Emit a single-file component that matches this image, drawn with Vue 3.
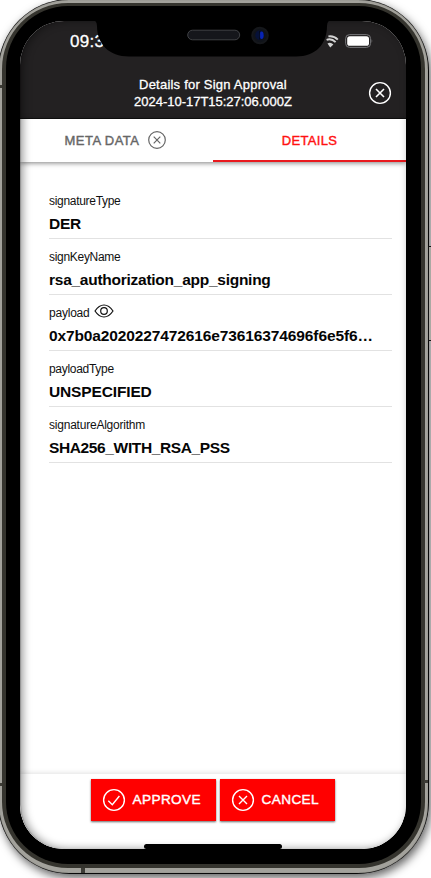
<script setup>
const fields = [
  { label: 'signatureType', value: 'DER', cls: 'f-type' },
  { label: 'signKeyName', value: 'rsa_authorization_app_signing', cls: 'f-key' },
  { label: 'payload', value: '0x7b0a2020227472616e73616374696f6e5f6…', eye: true, cls: 'f-payload' },
  { label: 'payloadType', value: 'UNSPECIFIED', cls: 'f-ptype' },
  { label: 'signatureAlgorithm', value: 'SHA256_WITH_RSA_PSS', cls: 'f-algo' },
]
</script>

<template>
  <main class="stage">
    <div class="device">
      <div class="steel">
        <div class="rim">
          <div class="bezel">
            <div class="screen">
              <header class="header">
                <div class="status">
                  <span class="time">09:3</span>
                  <span class="indicators">
                    <svg class="wifi" width="14" height="13" viewBox="0 0 14 13" fill="none" stroke="#d4d4d4" stroke-width="1.9">
                      <path d="M3.4 1.4Q9 .6 12.8 4.6M1.6 4.8Q6.5 3 10.6 7.2" />
                      <path d="M2.5 8.4Q5.6 6.8 8.4 9.4L5.2 12.6Z" fill="#d4d4d4" stroke="none" />
                    </svg>
                    <svg class="battery" width="28" height="14" viewBox="0 0 28 14">
                      <rect x=".6" y=".6" width="25" height="12.8" rx="4" fill="none" stroke="#77777a" />
                      <rect x="2.2" y="2.2" width="21.8" height="9.6" rx="2.6" fill="#fff" />
                      <path d="M26.6 5Q28 7 26.6 9Z" fill="#77777a" />
                    </svg>
                  </span>
                </div>
                <div class="titlebar">
                  <h1><span class="t1">Details for Sign Approval</span><span class="t2">2024-10-17T15:27:06.000Z</span></h1>
                  <svg class="close" width="24" height="24" viewBox="0 0 24 24" fill="none" stroke="#fff" stroke-width="1.4">
                    <circle cx="12" cy="12" r="10.4" /><path d="M8 8l8 8M16 8l-8 8" stroke-width="1.6" />
                  </svg>
                </div>
              </header>
              <nav class="tabs">
                <div class="tab meta"><span>META DATA</span>
                  <svg width="18" height="18" viewBox="0 0 18 18" fill="none" stroke="#666" stroke-width="1.2">
                    <circle cx="9" cy="9" r="8.3" /><path d="M5.7 5.7l6.6 6.6M12.3 5.7l-6.6 6.6" />
                  </svg>
                </div>
                <div class="tab active"><span>DETAILS</span></div>
              </nav>
              <section class="content">
                <div v-for="f in fields" :key="f.label" class="field" :class="f.cls">
                  <div class="label"><span>{{ f.label }}</span>
                    <svg v-if="f.eye" class="eye" width="20" height="14" viewBox="0 0 20 14" fill="none" stroke="#111" stroke-width="1.2">
                      <path d="M1 7Q5 1 10 1T19 7Q15 13 10 13T1 7Z" /><circle cx="10" cy="7" r="3.3" />
                    </svg>
                  </div>
                  <div class="value"><span>{{ f.value }}</span></div>
                </div>
              </section>
              <footer class="footer">
                <button class="approve">
                  <svg width="24" height="24" viewBox="0 0 24 24" fill="none" stroke="#fff" stroke-width="1.4">
                    <circle cx="12" cy="12" r="10.4" /><path d="M6.3 12.7l4 4L17.4 8" />
                  </svg><span>APPROVE</span>
                </button>
                <button class="cancel">
                  <svg width="24" height="24" viewBox="0 0 24 24" fill="none" stroke="#fff" stroke-width="1.4">
                    <circle cx="12" cy="12" r="10.4" /><path d="M8 8l8 8M16 8l-8 8" />
                  </svg><span>CANCEL</span>
                </button>
              </footer>
              <div class="home"></div>
              <div class="glass"></div>
              <svg class="notch" width="240" height="38" viewBox="0 0 240 38">
                <path d="M0 0H240Q235 0 235 6C235 24 224 36.5 204 36.5H37C17 36.5 5 24 5 6Q5 0 0 0Z" />
                <rect x="95.7" y="10.2" width="52" height="9.6" rx="4.8" fill="#15161b" stroke="#4d4e52" stroke-width=".8" />
                <circle cx="168" cy="15.5" r="7.8" fill="#10131a" stroke="#15171b" stroke-width="2" />
                <ellipse cx="167.7" cy="15.2" rx="4.4" ry="4.8" fill="#061138" />
                <ellipse cx="169.6" cy="15.2" rx="2" ry="3.8" fill="#0824b5" />
                <path d="M167.6 11v8.5" stroke="#050914" stroke-width=".8" />
              </svg>
            </div>
          </div>
        </div>
      </div>
      <i class="seam left-top"></i><i class="seam left-bottom"></i>
      <i class="seam right-bottom"></i><i class="seam bottom"></i>
      <i class="power"></i>
    </div>
  </main>
</template>

<style>
html, body { margin: 0; background: #fff; overflow: hidden; }
</style>

<style scoped>
* { box-sizing: border-box; }
.stage { width: 431px; height: 878px; overflow: hidden; background: #fff; font-family: "Liberation Sans", Arial, sans-serif; position: relative; }
.device { position: relative; width: 431px; height: 875px; margin: -1px 0 0 -2px; padding: 1px; background: #080808; border-radius: 72px; box-shadow: 2px 4px 10px rgba(0, 0, 0, .62); }
.steel { height: 100%; padding: 3px 3px 5px 3px; border-radius: 70px; background: #a3a29c; box-shadow: inset 0 0 1px #6b6a65; }
.rim { height: 100%; padding: 3px 4px 4px; border-radius: 66px; background: #35342e; }
.bezel { height: 100%; padding: 15px 15px 15px 14px; border-radius: 62px; background: #000; }
.screen { position: relative; display: flex; flex-direction: column; height: 100%; border-radius: 44px; overflow: hidden; background: #fff; }
.header { height: 98px; flex: none; background: #232122; color: #fff; border-bottom: 1px solid #111; }
.status { height: 43px; display: flex; justify-content: space-between; padding: 11px 33px 0 50px; }
.time { font-size: 17px; line-height: 20px; -webkit-text-stroke: .3px #fff; letter-spacing: .3px; }
.indicators { display: flex; align-items: center; gap: 6px; height: 18px; }
.titlebar { display: flex; align-items: center; height: 54px; padding: 4px 14px 0 38px; }
h1 { flex: 1; display: flex; flex-direction: column; align-items: center; margin: 0; font-size: 13px; line-height: 17px; font-weight: 400; -webkit-text-stroke: .3px #fff; }
.t1 { letter-spacing: .22px; }
.t2 { letter-spacing: -.02px; }
.close { margin-top: 0; }
.tabs { display: grid; grid-template-columns: 1fr 1fr; height: 43px; flex: none; background: #fff; box-shadow: 0 1px 5px rgba(0, 0, 0, .5); position: relative; }
.tab { display: flex; align-items: center; justify-content: center; gap: 9px; font-size: 13px; letter-spacing: .45px; }
.meta { color: #666; -webkit-text-stroke: .4px #666; padding-right: 2px; }
.meta svg { margin-top: -1px; }
.active { color: #f11; letter-spacing: .3px; -webkit-text-stroke: .4px #f11; border-bottom: 2px solid #e9181d; padding-top: 2px; }
.content { flex: 1; padding: 21px 14px 0 29px; }
.field { height: 56px; padding-top: 10px; border-bottom: 1px solid #e2e2e2; }
.label { display: flex; align-items: center; gap: 4px; height: 16px; font-size: 12px; line-height: 16px; color: #111; letter-spacing: -.3px; }
.eye { margin-top: -4px; }
.value { margin-top: 5px; font-size: 15.5px; line-height: 19px; font-weight: 700; color: #050505; white-space: nowrap; letter-spacing: -.26px; }
.f-payload .value { letter-spacing: -.12px; }
.f-ptype .value { letter-spacing: -.14px; }
.f-algo .value { letter-spacing: -.37px; }
.f-payload .label, .f-algo .label { letter-spacing: -.22px; }
.footer { flex: none; height: 75px; display: flex; justify-content: center; align-items: flex-start; gap: 4px; padding: 5px 0 0; background: #fff; box-shadow: 0 -1px 5px rgba(0, 0, 0, .12); }
button { display: flex; align-items: center; gap: 6.5px; height: 41.5px; border: 0; padding: 0 0 0 11px; background: #f00; color: #fff; font: 13.6px "Liberation Sans", Arial, sans-serif; letter-spacing: .4px; -webkit-text-stroke: .4px #fff; box-shadow: 0 1px 2px rgba(0, 0, 0, .6); }
.approve { width: 125px; }
.cancel { width: 115px; }
.home { position: absolute; left: 124px; bottom: .5px; width: 138px; height: 4.5px; border-radius: 3px; background: #000; }
.glass { position: absolute; inset: 0; border-radius: 44px; box-shadow: inset 1px 0 1px rgba(0, 0, 0, .2), inset 3px 0 9px rgba(0, 0, 0, .4); pointer-events: none; }
.notch { position: absolute; left: 72px; top: -1px; }
.seam { position: absolute; background: #3d3c36; }
.left-top, .left-bottom { left: 1px; width: 3px; height: 3px; }
.left-top { top: 86px; }
.left-bottom { top: 784px; }
.right-bottom { right: 1px; top: 781px; width: 4px; height: 3px; }
.bottom { left: 83px; bottom: 1px; width: 4px; height: 5px; }
.power { position: absolute; left: 430px; top: 247px; width: 4px; height: 95px; background: #aaa9a3; border: 1px solid #111; }
</style>
